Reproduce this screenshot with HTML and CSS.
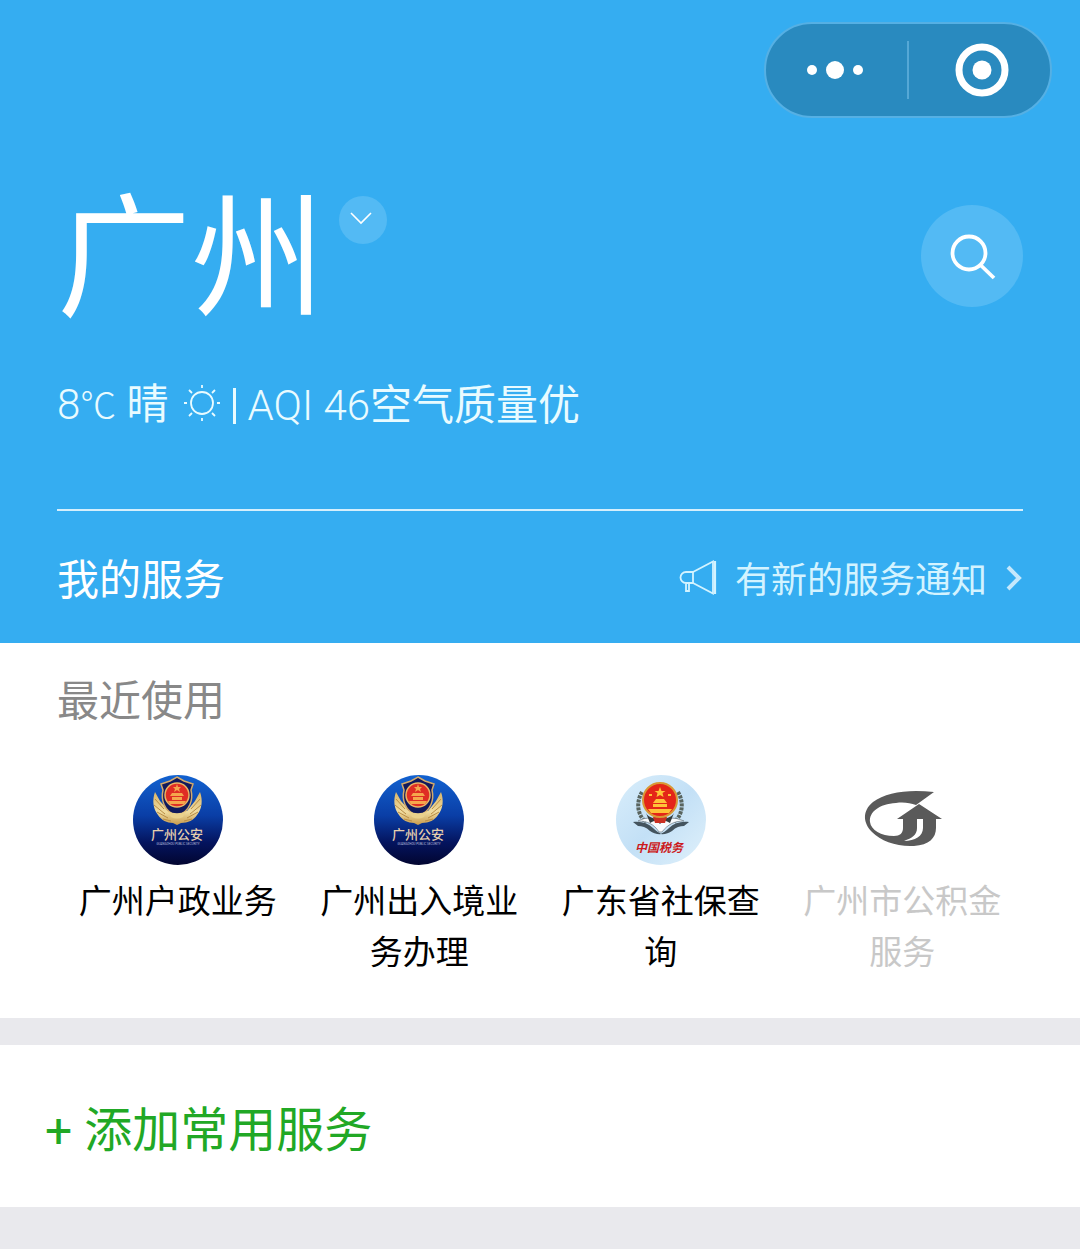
FILE: index.html
```html
<!DOCTYPE html>
<html lang="zh-CN">
<head>
<meta charset="utf-8">
<meta name="viewport" content="width=device-width, initial-scale=1">
<title>城市服务</title>
<link rel="stylesheet" href="styles.css">
</head>
<body>
<svg class="defs" aria-hidden="true">
  <defs>
    <linearGradient id="navy" x1="0" y1="0" x2="0" y2="1">
      <stop offset="0" stop-color="#1262d0"/><stop offset=".45" stop-color="#0a3ea6"/>
      <stop offset=".75" stop-color="#04145e"/><stop offset="1" stop-color="#020530"/>
    </linearGradient>
    <linearGradient id="sky" x1="0" y1="0" x2="1" y2="1">
      <stop offset="0" stop-color="#d9eefb"/><stop offset=".5" stop-color="#c3e0f6"/><stop offset="1" stop-color="#e0f1fb"/>
    </linearGradient>
    <linearGradient id="gold" x1="0" y1="0" x2="0" y2="1">
      <stop offset="0" stop-color="#d9b568"/><stop offset=".6" stop-color="#f0dca0"/><stop offset="1" stop-color="#c79a4c"/>
    </linearGradient>
    <symbol id="police" viewBox="0 0 90 90">
      <circle cx="45" cy="45" r="45" fill="url(#navy)"/>
      <path d="M22 17C19 25 20 34 25 40c3 5 9 8 15 8l4 2 4-2c7 0 13-3 16-8 5-6 6-15 3-23l-5 9-8 10H36l-9-10z" fill="url(#gold)"/>
      <path d="M22 24l9 10M21 30l11 9M24 37l11 6M30 44l8 2M67 24l-9 10M68 30l-11 9M65 37l-11 6M59 44l-8 2" stroke="#b98d45" fill="none"/>
      <path d="M44 2l7 4 9 3-2 6c2 9 0 21-14 26C30 36 28 24 30 15l-2-6 9-3z" fill="#10195c" stroke="#d3a96a" stroke-width="1.500"/>
      <circle cx="44" cy="20" r="12" fill="#df2d24" stroke="#e9b665" stroke-width="1.500"/>
      <path d="M44 9l1 3h3l-2 2 1 3-3-2-3 2 1-3-2-2h3zM37 21h14l-2-3H39zM39 22h10v3H39zM35 26h18l-2 3H37z" fill="#f5a64c"/>
      <path d="M35 36c5 3 13 3 18 0l-3 6c-4 2-8 2-12 0z" fill="#ead08b"/>
      <text x="44" y="64" text-anchor="middle" class="emblem-name">广州公安</text>
      <text x="45" y="70" text-anchor="middle" class="emblem-sub">GUANGZHOU PUBLIC SECURITY</text>
    </symbol>
  </defs>
</svg>

<header class="hero">
  <div class="capsule">
    <button class="capsule-btn" type="button" aria-label="更多">
      <svg width="60" height="24" viewBox="0 0 60 24" fill="#fff"><circle cx="7" cy="12" r="5"/><circle cx="30" cy="12" r="9"/><circle cx="53" cy="12" r="5"/></svg>
    </button>
    <span class="capsule-line"></span>
    <button class="capsule-btn" type="button" aria-label="关闭">
      <svg width="54" height="54" viewBox="0 0 54 54"><circle cx="27" cy="27" r="23" fill="none" stroke="#fff" stroke-width="7"/><circle cx="27" cy="27" r="9.500" fill="#fff"/></svg>
    </button>
  </div>

  <div class="city-row">
    <h1 class="city">广州</h1>
    <button class="city-switch" type="button" aria-label="切换城市">
      <svg width="24" height="14" viewBox="0 0 24 14" fill="none" stroke="#fff" stroke-width="1.600"><path d="M2 2l10 10L22 2"/></svg>
    </button>
    <button class="search" type="button" aria-label="搜索">
      <svg width="48" height="48" viewBox="0 0 48 48" fill="none" stroke="#fff" stroke-width="3.800"><circle cx="21" cy="21" r="16.500"/><path d="M32.500 33l13.500 13"/></svg>
    </button>
  </div>

  <p class="weather">
    <span class="temp">8<span class="unit">℃</span> <span class="han">晴</span></span>
    <svg class="sun" width="36" height="36" viewBox="0 0 36 36" fill="none" stroke="#e9fbff" stroke-width="1.800"><circle cx="18" cy="18" r="11"/><path d="M18 0v3M18 33v3M0 18h3M33 18h3M5 5l3 3M28 28l3 3M31 5l-3 3M8 28l-3 3"/></svg>
    <span class="weather-line"></span>
    <span>AQI 46<span class="han">空气质量优</span></span>
  </p>

  <div class="mine">
    <h2 class="mine-title">我的服务</h2>
    <a class="notice" href="#notice">
      <svg class="notice-icon" width="38" height="36" viewBox="0 0 38 36" fill="none" stroke="#d3f3ff" stroke-width="1.800"><path d="M14 12L34 1.500v32L14 23"/><path d="M36 1v33" stroke-width="2.200"/><path d="M14 12v11H7a5.500 5.500 0 0 1 0-11zM7 23v8h3v-8"/></svg>
      <span>有新的服务通知</span>
      <svg class="notice-icon" width="18" height="28" viewBox="0 0 18 28" fill="none" stroke="#c5e8fc" stroke-width="4"><path d="M3 3l11 11L3 25"/></svg>
    </a>
  </div>
</header>

<main>
  <section class="recent">
    <h2 class="recent-title">最近使用</h2>
    <div class="services">
      <a class="service" href="#household">
        <svg class="service-icon" viewBox="0 0 90 90" aria-hidden="true"><use href="#police"/></svg>
        <span>广州户政业务</span>
      </a>
      <a class="service" href="#exit-entry">
        <svg class="service-icon" viewBox="0 0 90 90" aria-hidden="true"><use href="#police"/></svg>
        <span>广州出入境业务办理</span>
      </a>
      <a class="service" href="#social">
        <svg class="service-icon" viewBox="0 0 90 90" aria-hidden="true">
          <circle cx="45" cy="45" r="45" fill="url(#sky)"/>
          <g fill="none" stroke="#59645e" stroke-width="4" stroke-dasharray="3 1"><path d="M26 17c-6 10-5 23 4 30"/><path d="M62 17c6 10 5 23-4 30"/></g>
          <path d="M17 47c8-1 15 1 20 6 3 3 6 5 9 6-4 1-9-1-12-3-4-4-8-5-12-5zM73 47c-8-1-15 1-20 6-3 3-6 5-9 6 4 1 9-1 12-3 4-4 8-5 12-5z" fill="#44545e"/>
          <path d="M22 46c9-5 17-3 22 3 5-6 13-8 24-3-9 0-16 3-22 11h-3c-5-8-12-11-21-11z" fill="#f8fbfd" stroke="#77858f" stroke-width=".800"/>
          <path d="M30 38c4 8 24 8 28 0l-4 10c-6-4-14-4-20 0z" fill="#353c3d"/>
          <path d="M37 42h14l-2 6H39z" fill="#ca3022"/>
          <circle cx="44" cy="25" r="17" fill="#e42518" stroke="#d99835" stroke-width="2"/>
          <path d="M44 12l1.500 4h4l-3 2 1 4-3.500-2-3.500 2 1-4-3-2h4zM33 19h3v2h-3zM52 19h3v2h-3zM37 28l3-4h8l3 4zM37 29h14v3H37zM32 34h24l-3 4H35z" fill="#ffc238"/>
          <text x="43" y="77" text-anchor="middle" class="tax-name">中国税务</text>
        </svg>
        <span>广东省社保查询</span>
      </a>
      <a class="service is-off" href="#fund" aria-disabled="true">
        <svg class="service-icon" viewBox="0 0 90 90" aria-hidden="true">
          <path d="M77 17C52 14 29 17 16 27 5 36 6 48 15 57c9 9 25 15 42 14 15-1 22-8 22-18V44h6L62 29 40 44h6v9c0 5-3 8-9 8-13 0-23-6-24-14-1-10 9-18 26-19 8-1 14 0 20 2z" fill="#5a5a5a"/>
          <path d="M60 44h6v9c0 8-8 13-19 13 8-3 13-6 13-13z" fill="#fff"/>
        </svg>
        <span>广州市公积金服务</span>
      </a>
    </div>
  </section>

  <section class="add">
    <button class="add-btn" type="button">+ 添加常用服务</button>
  </section>
</main>
</body>
</html>
```

FILE: styles.css
```css
* {
  box-sizing: border-box;
}

body {
  margin: 0;
  background: #fff;
  color: #000;
  font-family: Roboto, "Noto Sans CJK SC", sans-serif;
}

h1,
h2,
p {
  margin: 0;
  font-weight: 400;
}

a {
  color: inherit;
  text-decoration: none;
}

button {
  padding: 0;
  border: 0;
  background: none;
  color: inherit;
  font: inherit;
  cursor: pointer;
}

svg {
  display: block;
  flex: none;
}

.defs {
  position: absolute;
  width: 0;
  height: 0;
}

.hero {
  padding: 22px 57px 0;
  background: #35adf1;
  color: #fff;
}

.capsule {
  display: flex;
  align-items: center;
  width: 288px;
  height: 96px;
  margin: 0 -29px 0 auto;
  border: 2px solid #55b0e4;
  border-radius: 48px;
  background: #298abf;
}

.capsule-btn {
  display: flex;
  flex: 1;
  align-items: center;
  justify-content: center;
  height: 100%;
}

.capsule-btn:first-child {
  padding-right: 4px;
}

.capsule-btn:last-child {
  padding-left: 4px;
}

.capsule-line {
  width: 2px;
  height: 58px;
  background: #55a8d6;
}

.city-row {
  display: flex;
  align-items: center;
  margin-top: 72px;
}

.city {
  padding-top: 10px;
  font-size: 134px;
  line-height: 122px;
}

.city-switch {
  display: flex;
  align-items: center;
  justify-content: center;
  align-self: flex-start;
  width: 48px;
  height: 48px;
  margin: 6px 0 0 14px;
  padding: 0 4px 4px 0;
  border-radius: 50%;
  background: #53baf4;
}

.search {
  display: flex;
  align-items: center;
  justify-content: center;
  width: 102px;
  height: 102px;
  margin-left: auto;
  border-radius: 50%;
  background: #53baf4;
}

.weather {
  display: flex;
  align-items: center;
  height: 60px;
  margin-top: 54px;
  color: #e9fbff;
  font-size: 42px;
  font-weight: 300;
  line-height: 60px;
}

.unit {
  font-size: 36px;
}

.han {
  font-weight: 400;
}

.sun {
  margin: 0 13px 6px 15px;
}

.weather-line {
  width: 3px;
  height: 36px;
  margin-right: 12px;
  background: #e9fbff;
}

.mine {
  display: flex;
  align-items: center;
  justify-content: space-between;
  margin-top: 73px;
  padding: 40px 0 32px;
  border-top: 2px solid #d5effc;
}

.mine-title,
.recent-title {
  font-size: 42px;
  line-height: 60px;
}

.notice {
  display: flex;
  align-items: center;
  gap: 18px;
  color: #d3f3ff;
  font-size: 36px;
  line-height: 60px;
}

.notice-icon {
  margin-bottom: 6px;
}

.recent {
  padding: 29px 57px 40px;
}

.recent-title {
  color: #888;
}

.services {
  display: grid;
  grid-template-columns: repeat(4, 1fr);
  margin-top: 43px;
}

.service {
  display: flex;
  flex-direction: column;
  align-items: center;
  gap: 11px;
  padding: 0 21px;
  font-size: 33px;
  line-height: 51px;
  text-align: center;
}

.service.is-off {
  color: #c8c8c8;
}

.service-icon {
  width: 90px;
  height: 90px;
}

.emblem-name {
  fill: #e6cfae;
  font: 500 13px "Noto Sans CJK SC", sans-serif;
}

.emblem-sub {
  fill: #b8bddb;
  font: 3px Roboto, sans-serif;
}

.tax-name {
  fill: #cc1a20;
  font: italic 700 12px "Noto Sans CJK SC", sans-serif;
}

.add {
  padding: 56px 45px 46px;
  border-top: 27px solid #e9e9ed;
  border-bottom: 42px solid #e9e9ed;
}

.add-btn {
  display: block;
  color: #21a825;
  font-size: 48px;
  line-height: 60px;
}
```
